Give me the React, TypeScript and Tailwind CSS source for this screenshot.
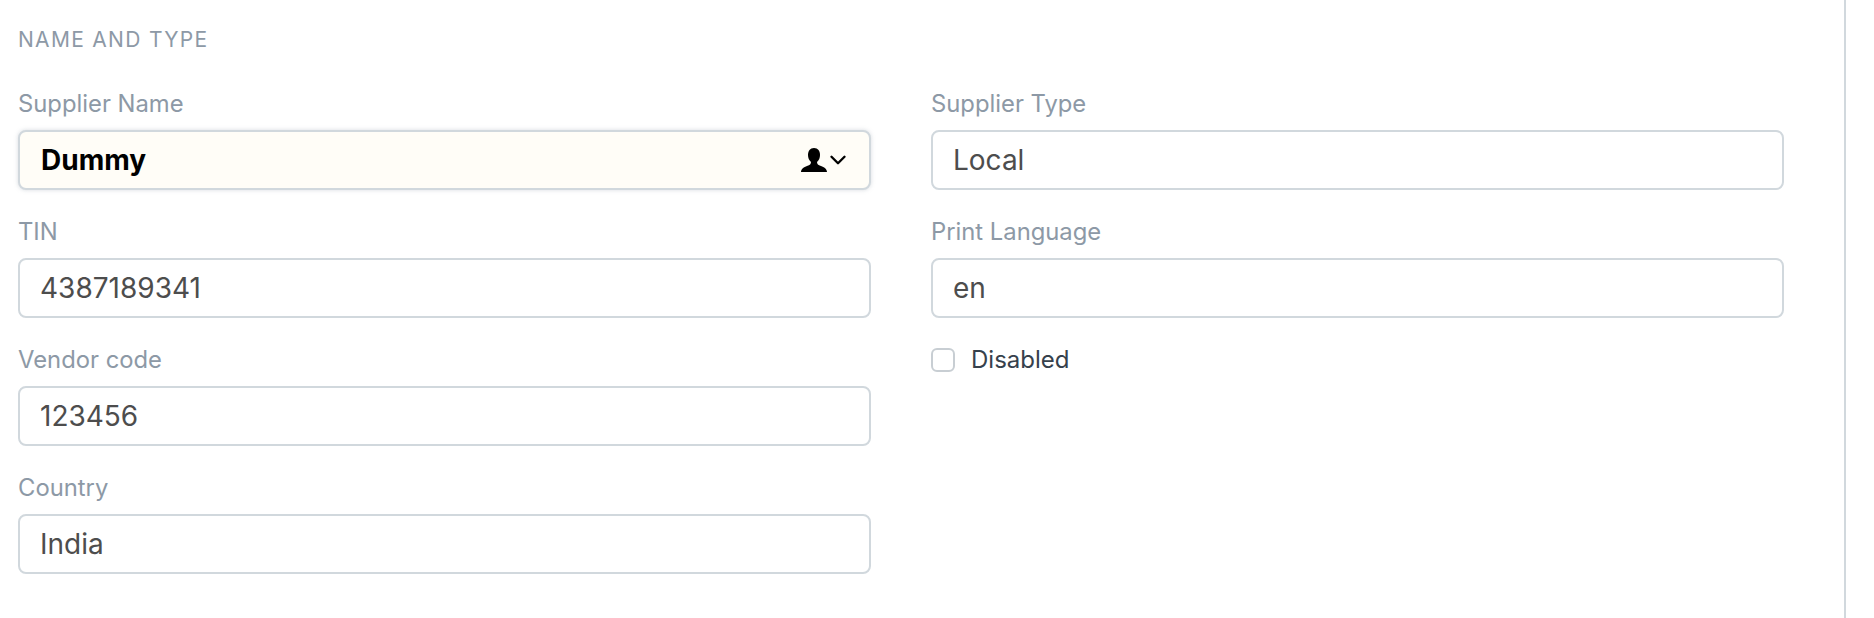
import { ChevronDown } from "lucide-react";

function Field({ label, value, bold }: { label: string; value: string; bold?: boolean }) {
    return <div className="flex flex-col">
        <label className="h-[46px] text-[23.8px] leading-[40px] text-[#8d99a6]">{label}</label>
        <div className={bold
            ? "flex h-[60px] items-center justify-between rounded-[8px] border-2 border-[#d1d8dd] bg-[#fffdf7] pl-[21px] pr-[18px] text-[28px] font-bold text-black shadow-[0_0_4px_rgba(141,153,166,0.35)]"
            : "flex h-[60px] items-center rounded-[8px] border-2 border-[#d1d8dd] bg-white px-[20px] text-[28px] text-[#4d4d4d]"}>
            <span>{value}</span>
            {bold && <div className="flex items-center">
                <svg width="26" height="24" viewBox="0 0 26 24" fill="black">
                    <path d="M13 0c4 0 6 3 6 7 0 3-1 5-3 7 0 2 1 3 4 4 3 1 6 3 6 6H0c0-3 3-5 6-6 3-1 4-2 4-4-2-2-3-4-3-7 0-4 2-7 6-7z" />
                </svg>
                <ChevronDown size={26} strokeWidth={2.2} color="black" className="-ml-[2px]" />
            </div>}
        </div>
    </div>
}

export default function App() {
    return <div className="h-[618px] w-[1874px] bg-white font-['Inter',sans-serif]">
        <div className="h-[618px] w-[1846px] border-r-2 border-[#d1d8dd] pl-[18px] pt-[26px]">
            <div className="h-[28px] text-[21px] uppercase leading-[28px] tracking-[1.3px] text-[#8d99a6]">Name and type</div>
            <div className="mt-[30px] grid w-[1766px] grid-cols-2 gap-x-[60px]">
                <div className="flex flex-col gap-[22px]">
                    <Field label="Supplier Name" value="Dummy" bold />
                    <Field label="TIN" value="4387189341" />
                    <Field label="Vendor code" value="123456" />
                    <Field label="Country" value="India" />
                </div>
                <div className="flex flex-col gap-[22px]">
                    <Field label="Supplier Type" value="Local" />
                    <Field label="Print Language" value="en" />
                    <div className="flex h-[40px] items-center gap-[16px]">
                        <div className="h-[24px] w-[24px] rounded-[6px] border-2 border-[#c8ced3] bg-white"></div>
                        <span className="text-[24px] text-[#36414c]">Disabled</span>
                    </div>
                </div>
            </div>
        </div>
    </div>
}
